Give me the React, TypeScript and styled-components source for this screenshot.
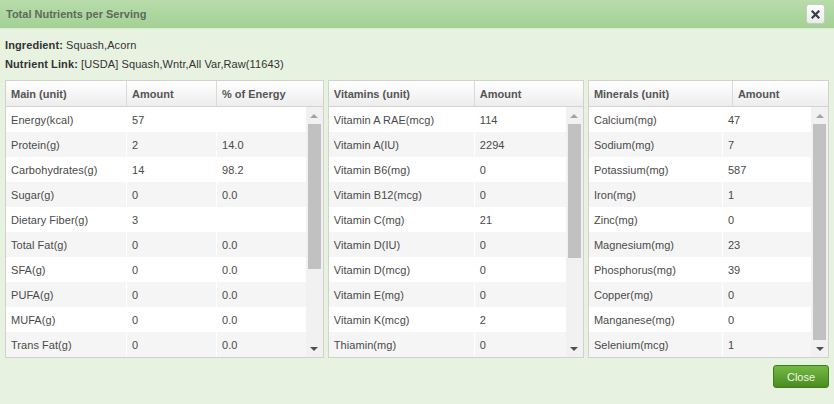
import React, { FunctionComponent } from 'react';
import styled, { createGlobalStyle } from 'styled-components';

const GlobalStyle = createGlobalStyle`
  html, body {
    margin: 0;
    padding: 0;
    background: #e8f2e1;
  }
  body {
    font-family: 'Liberation Sans', Arial, sans-serif;
    font-size: 11px;
    color: #444;
  }
`;

const Dialog = styled.div`
  width: 834px;
  height: 404px;
  display: flex;
  flex-direction: column;
  background: #e8f2e1;
  box-sizing: border-box;
`;

const TitleBar = styled.div`
  height: 29px;
  box-sizing: border-box;
  display: flex;
  align-items: center;
  justify-content: space-between;
  padding: 0 9px 0 6px;
  background: linear-gradient(to bottom, #b8dcab, #a3d195);
  border-bottom: 1px solid #d7ebcf;
`;

const Title = styled.span`
  font-weight: bold;
  font-size: 11px;
  color: #5d6b59;
`;

const CloseX = styled.button`
  width: 19px;
  height: 20px;
  padding: 0;
  display: flex;
  align-items: center;
  justify-content: center;
  border: 1px solid #c4cfc0;
  border-radius: 3px;
  background: linear-gradient(to bottom, #ffffff, #eaeaea);
`;

const Info = styled.div`
  padding: 7px 5px 0;
  line-height: 19px;
  color: #333;
  letter-spacing: 0.1px;
`;

const Label = styled.b`
  color: #333;
`;

const TablesRow = styled.div`
  display: flex;
  gap: 4px;
  padding: 0 5px;
  margin-top: 6px;
`;

const TableBox = styled.div<{ $width: number }>`
  width: ${(p) => p.$width}px;
  border: 1px solid #cfd3cc;
  background: #fff;
  box-sizing: border-box;
  display: flex;
  flex-direction: column;
`;

const HeaderRow = styled.div<{ $cols: string }>`
  display: grid;
  grid-template-columns: ${(p) => p.$cols};
  height: 26px;
  box-sizing: border-box;
  border-bottom: 1px solid #d3d3d3;
  background: linear-gradient(to bottom, #ffffff, #ededed);
`;

const HeaderCell = styled.div`
  display: flex;
  align-items: center;
  padding-left: 5px;
  font-weight: bold;
  color: #555;
  border-right: 1px solid #dadada;
  &:last-child {
    border-right: none;
  }
`;

const Body = styled.div`
  display: flex;
`;

const Rows = styled.div`
  flex: 1;
`;

const DataRow = styled.div<{ $cols: string; $odd: boolean }>`
  display: grid;
  grid-template-columns: ${(p) => p.$cols};
  height: 25px;
  background: ${(p) => (p.$odd ? '#f5f5f5' : '#ffffff')};
`;

const DataCell = styled.div`
  display: flex;
  align-items: center;
  padding-left: 5px;
  color: #4a4a4a;
  letter-spacing: 0.05px;
  border-right: 1px solid #fff;
  &:last-child {
    border-right: none;
  }
`;

const ScrollTrack = styled.div`
  width: 17px;
  background: #f1f1f1;
  display: flex;
  flex-direction: column;
`;

const ArrowBox = styled.div`
  height: 17px;
  display: flex;
  align-items: center;
  justify-content: center;
`;

const ArrowUp = styled.div`
  width: 0;
  height: 0;
  border-left: 4px solid transparent;
  border-right: 4px solid transparent;
  border-bottom: 4px solid #a3a3a3;
`;

const ArrowDown = styled.div`
  width: 0;
  height: 0;
  border-left: 4px solid transparent;
  border-right: 4px solid transparent;
  border-top: 4px solid #505050;
`;

const Lane = styled.div`
  flex: 1;
  display: flex;
  flex-direction: column;
  padding: 0 2px;
`;

const Thumb = styled.div<{ $height: number }>`
  height: ${(p) => p.$height}px;
  background: #c1c1c1;
`;

const Footer = styled.div`
  display: flex;
  justify-content: flex-end;
  padding: 7px 5px 0;
`;

const CloseButton = styled.button`
  width: 56px;
  height: 23px;
  border: 1px solid #3f7d1c;
  border-radius: 3px;
  background: linear-gradient(to bottom, #74b944, #4b8c22);
  color: #eef8e4;
  font-family: 'Liberation Sans', Arial, sans-serif;
  font-size: 11px;
  padding: 0;
`;

type Row = string[];

interface TableProps {
  width: number;
  headers: string[];
  headCols: string;
  bodyCols: string;
  rows: Row[];
  thumb: number;
}

const NutrientTable: FunctionComponent<TableProps> = ({ width, headers, headCols, bodyCols, rows, thumb }) => (
  <TableBox $width={width}>
    <HeaderRow $cols={headCols}>
      {headers.map((h) => (
        <HeaderCell key={h}>{h}</HeaderCell>
      ))}
    </HeaderRow>
    <Body>
      <Rows>
        {rows.map((r, i) => (
          <DataRow key={r[0]} $cols={bodyCols} $odd={i % 2 === 1}>
            {r.map((c, j) => (
              <DataCell key={j}>{c}</DataCell>
            ))}
          </DataRow>
        ))}
      </Rows>
      <ScrollTrack>
        <ArrowBox>
          <ArrowUp />
        </ArrowBox>
        <Lane>
          <Thumb $height={thumb} />
        </Lane>
        <ArrowBox>
          <ArrowDown />
        </ArrowBox>
      </ScrollTrack>
    </Body>
  </TableBox>
);

const mainRows: Row[] = [
  ['Energy(kcal)', '57', ''],
  ['Protein(g)', '2', '14.0'],
  ['Carbohydrates(g)', '14', '98.2'],
  ['Sugar(g)', '0', '0.0'],
  ['Dietary Fiber(g)', '3', ''],
  ['Total Fat(g)', '0', '0.0'],
  ['SFA(g)', '0', '0.0'],
  ['PUFA(g)', '0', '0.0'],
  ['MUFA(g)', '0', '0.0'],
  ['Trans Fat(g)', '0', '0.0'],
];

const vitaminRows: Row[] = [
  ['Vitamin A RAE(mcg)', '114'],
  ['Vitamin A(IU)', '2294'],
  ['Vitamin B6(mg)', '0'],
  ['Vitamin B12(mcg)', '0'],
  ['Vitamin C(mg)', '21'],
  ['Vitamin D(IU)', '0'],
  ['Vitamin D(mcg)', '0'],
  ['Vitamin E(mg)', '0'],
  ['Vitamin K(mcg)', '2'],
  ['Thiamin(mg)', '0'],
];

const mineralRows: Row[] = [
  ['Calcium(mg)', '47'],
  ['Sodium(mg)', '7'],
  ['Potassium(mg)', '587'],
  ['Iron(mg)', '1'],
  ['Zinc(mg)', '0'],
  ['Magnesium(mg)', '23'],
  ['Phosphorus(mg)', '39'],
  ['Copper(mg)', '0'],
  ['Manganese(mg)', '0'],
  ['Selenium(mcg)', '1'],
];

const App: FunctionComponent = () => (
  <Dialog>
    <GlobalStyle />
    <TitleBar>
      <Title>Total Nutrients per Serving</Title>
      <CloseX aria-label="close">
        <svg width="9" height="9" viewBox="0 0 9 9">
          <path d="M1.5 1.5 L7.5 7.5 M7.5 1.5 L1.5 7.5" stroke="#333c4a" strokeWidth="2.2" strokeLinecap="square" />
        </svg>
      </CloseX>
    </TitleBar>
    <Info>
      <div>
        <Label>Ingredient:</Label> Squash,Acorn
      </div>
      <div>
        <Label>Nutrient Link:</Label> [USDA] Squash,Wntr,All Var,Raw(11643)
      </div>
    </Info>
    <TablesRow>
      <NutrientTable
        width={320}
        headers={['Main (unit)', 'Amount', '% of Energy']}
        headCols="121px 90px 1fr"
        bodyCols="121px 90px 1fr"
        rows={mainRows}
        thumb={145}
      />
      <NutrientTable
        width={257}
        headers={['Vitamins (unit)', 'Amount']}
        headCols="146px 1fr"
        bodyCols="146px 1fr"
        rows={vitaminRows}
        thumb={134}
      />
      <NutrientTable
        width={242}
        headers={['Minerals (unit)', 'Amount']}
        headCols="144px 1fr"
        bodyCols="134px 1fr"
        rows={mineralRows}
        thumb={216}
      />
    </TablesRow>
    <Footer>
      <CloseButton>Close</CloseButton>
    </Footer>
  </Dialog>
);

export default App;
